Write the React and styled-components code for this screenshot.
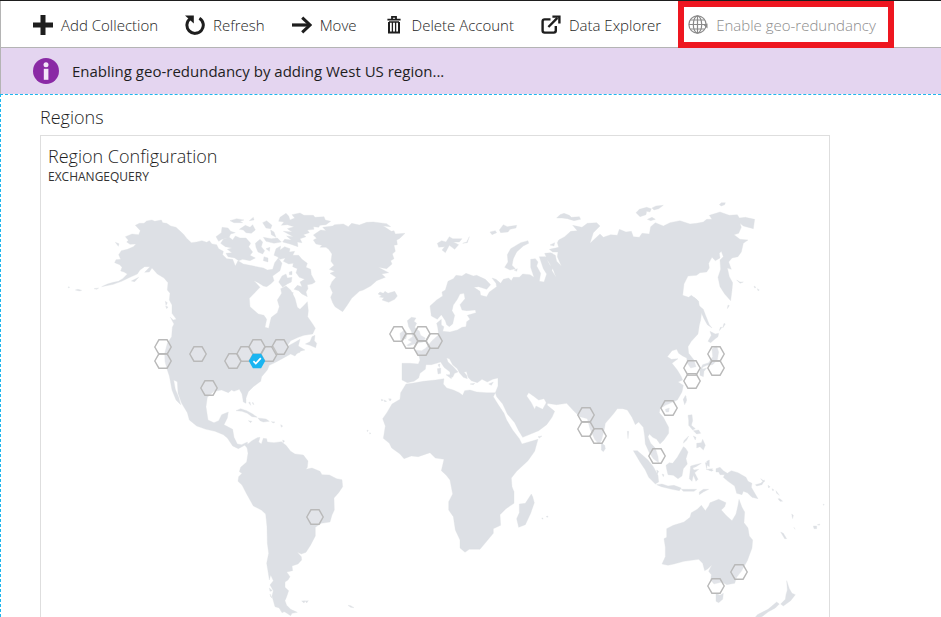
import React from "react";
import styled, { createGlobalStyle, css } from "styled-components";

const GlobalStyle = createGlobalStyle`
  *, *::before, *::after { box-sizing: border-box; }
  body {
    margin: 0;
    background: #fff;
    color: #333;
    font-family: "Open Sans", "Noto Sans", sans-serif;
    font-size: 15px;
  }
`;

const Blade = styled.div`
  display: flex;
  flex-direction: column;
  height: 100vh;
  overflow: hidden;
  border-top: 1px solid #1e1e1e;
`;

const Toolbar = styled.header`
  display: flex;
  flex: none;
  align-items: stretch;
  gap: 27px;
  height: 47px;
  padding-left: 32px;
  border-left: 1px solid #b4b4b4;
  border-bottom: 1px solid #b4b4b4;
`;

const Command = styled.button`
  position: relative;
  display: flex;
  flex: none;
  align-items: center;
  gap: 8px;
  padding: 2px 0 0;
  border: 0;
  background: none;
  color: #1e1e1e;
  font-family: inherit;
  font-size: 15px;
  font-weight: 300;
  line-height: 20px;
  white-space: nowrap;

  svg { flex: none; color: #1e1e1e; }

  &:disabled {
    color: #8c8c8c;
    svg { color: #8a8a8a; }
  }

  ${(p) => p.$highlighted && css`
    &::after {
      content: "";
      position: absolute;
      inset: 0 -18px -1px -10px;
      border: 6px solid #ee1620;
      pointer-events: none;
    }
  `}
`;

const Banner = styled.div`
  display: flex;
  flex: none;
  align-items: center;
  gap: 13px;
  height: 46px;
  padding-left: 32px;
  border-left: 1px solid #b4b4b4;
  background: #e4d5f0;
  color: #1e1e1e;
  font-size: 15px;
  line-height: 20px;
`;

const Content = styled.main`
  flex: 1;
  min-height: 0;
  padding: 12px 40px 0 39px;
  border-top: 1px dashed #1fb6ee;
  border-left: 1px dashed #1fb6ee;
`;

const SectionTitle = styled.h2`
  margin: 0 0 8px;
  color: #1e1e1e;
  font-size: 18px;
  font-weight: 300;
  line-height: 20px;
`;

const Card = styled.section`
  width: 100%;
  max-width: 790px;
  border: 1px solid #dedede;
`;

const CardHeader = styled.div`
  padding: 10px 7px 5px;
`;

const CardTitle = styled.h3`
  margin: 0;
  color: #1e1e1e;
  font-size: 18px;
  font-weight: 300;
  line-height: 20px;
`;

const CardSubtitle = styled.p`
  margin: 3px 0 0;
  color: #333;
  font-size: 12px;
  line-height: 16px;
`;

const Map = styled.svg`
  display: block;
  width: 100%;
  height: auto;
`;

const Icon = ({ children, ...rest }) => (
  <svg width="20" height="20" viewBox="0 0 20 20" fill="none" stroke="currentColor" aria-hidden="true" {...rest}>
    {children}
  </svg>
);

const PlusIcon = () => <Icon strokeWidth="5"><path d="M10 0v20M0 10h20" /></Icon>;

const RefreshIcon = () => (
  <Icon strokeWidth="3">
    <path d="M5.2 3.6A8.2 8.2 0 1 0 14.4 3.2" />
    <path d="M0 0.4h8.8v8.2z" fill="currentColor" stroke="none" />
  </Icon>
);

const MoveIcon = () => (
  <Icon>
    <path d="M0 10h18" strokeWidth="3.2" />
    <path d="M10.2 2.6 18 10l-7.8 7.4" strokeWidth="3" />
  </Icon>
);

const TrashIcon = () => (
  <Icon strokeWidth="1.8">
    <path d="M3.4 4.6h13.2M8 4V1.9h4V4" />
    <path d="M5 7v10.6h10V7" strokeWidth="2" />
    <path d="M8.4 7v10M11.6 7v10M5 7h10" strokeWidth="1.3" />
  </Icon>
);

const ExternalIcon = () => (
  <Icon strokeWidth="2.4">
    <path d="M9.5 4.4H3.6q-2 0-2 2v9.2q0 2 2 2h9.2q2 0 2-2V11" />
    <path d="m7.4 12 9-9.2" strokeWidth="2.4" />
    <path d="M11.4 1.6h7v7" strokeWidth="2.4" />
  </Icon>
);

const GlobeIcon = () => (
  <Icon strokeWidth="1.2">
    <circle cx="9.5" cy="9.5" r="8.6" />
    <ellipse cx="9.5" cy="9.5" rx="4.2" ry="8.6" />
    <path d="M9.5 1v17M1 9.5h17M2.4 5h14.2M2.4 14h14.2" />
    <path d="m15 9.5 4.5-1v5z" fill="currentColor" stroke="none" />
  </Icon>
);

const InfoIcon = () => (
  <svg width="26" height="26" viewBox="0 0 26 26" aria-hidden="true">
    <circle cx="13" cy="13" r="13" fill="#8a2aa5" />
    <circle cx="13" cy="6.8" r="2.5" fill="#f3e6f8" />
    <rect x="10.8" y="10.8" width="4.6" height="11" fill="#f3e6f8" />
  </svg>
);

const COMMANDS = [
  { label: "Add Collection", icon: PlusIcon },
  { label: "Refresh", icon: RefreshIcon },
  { label: "Move", icon: MoveIcon },
  { label: "Delete Account", icon: TrashIcon },
  { label: "Data Explorer", icon: ExternalIcon },
  { label: "Enable geo-redundancy", icon: GlobeIcon, disabled: true, highlighted: true },
];

const LAND = [
  {
    x: 50, y: 190,
    shapes: [
      // North and Central America
      "155,290 172,282 190,277 205,274 218,266 232,252 222,246 212,243 216,232 209,224 194,218 198,209 212,208 206,194 214,182 232,178 250,170 258,162 240,163 230,156 235,151 226,140 246,132 266,134 271,122 256,106 268,100 282,100 290,93 306,90 314,94 334,90 338,98 350,100 362,108 378,112 400,132 410,145 424,158 440,156 456,152 470,157 478,152 486,162 500,164 506,176 520,184 518,194 530,206 548,208 556,228 564,212 580,222 600,226 640,234 652,240 668,238 674,218 685,204 696,220 690,242 668,258 672,272 662,282 650,290 640,288 625,278 612,272 630,292 622,300 598,325 600,350 625,372 642,376 650,388 645,412 656,415 661,393 664,382 682,368 688,350 682,330 695,310 692,296 708,288 722,300 735,325 742,352 750,358 763,345 772,335 775,362 773,380 788,402 796,415 788,432 762,436 745,442 722,452 710,470 732,458 750,448 745,468 765,480 745,485 735,498 722,492 702,503 680,515 658,526 652,540 635,560 632,574 610,590 595,605 588,625 588,640 580,636 576,612 568,598 552,604 545,600 535,608 515,600 492,604 472,622 468,650 474,690 492,698 506,692 515,674 535,666 532,684 522,704 548,718 552,742 562,762 575,764 592,756 594,776 584,766 565,776 548,768 532,744 520,734 495,724 468,718 440,708 418,690 412,668 395,640 384,610 382,575 371,570 376,598 386,622 392,644 378,630 366,600 358,558 352,540 345,515 344,490 352,460 365,440 367,412 372,402 361,382 370,390 379,388 366,370 366,345 358,330 360,310 352,300 354,278 342,264 332,258 322,252 306,234 298,246 284,247 300,230 284,230 270,240 262,252 240,262 215,274 190,283",
      "196,157 207,161 205,169", "244,273 266,262 254,275",
      "55,290 59,292 55,294", "76,300 84,298 95,301 88,303", "132,296 146,294 140,298",
      "346,334 352,338 348,346", "347,348 354,351 350,356",
    ],
  },
  {
    x: 200, y: 190,
    shapes: [
      // Greenland, Iceland, Newfoundland
      "340,150 350,145 340,135 362,120 378,122 368,112 398,108 404,104 430,102 445,110 455,100 478,105 500,97 520,96 560,101 572,110 550,108 574,124 582,122 586,132 615,130 598,146 590,150 592,164 582,166 586,184 577,192 582,206 572,212 576,222 560,236 535,232 566,248 545,252 556,262 530,272 512,288 490,300 478,304 455,325 442,345 428,365 405,350 398,338 392,322 398,308 390,290 396,275 408,262 390,250 404,244 388,238 402,226 393,214 396,192 386,178 378,172 360,172 366,166 348,162",
      "534,312 540,306 550,310 555,304 564,310 584,304 592,318 584,328 566,337 546,330 552,323 538,321 545,317",
      "316,462 330,455 336,440 345,436 343,452 350,460 347,473 330,466",
      "285,487 302,476 300,487 288,491",
      // Canadian Arctic
      "240,82 258,70 266,78 270,90 284,84 276,74 300,69 312,76 340,76 345,82 372,80 376,90 392,94 378,104 360,106 356,112 340,110 342,118 322,120 328,128 310,134 318,140 300,146 306,158 292,156 294,170 270,162 248,156 254,148 274,150 260,138 280,140 250,124 276,126 262,116 282,110 262,104 244,106 252,96 236,94",
      "62,160 70,148 88,142 98,150 106,138 120,144 138,144 152,160 146,170 158,186 150,196 166,204 150,212 128,208 116,212 104,204 84,200 78,190 96,188 82,178 96,174 76,170",
      "48,140 64,128 66,112 84,114 92,124 106,128 92,132 86,144 66,148 56,154",
      "90,92 110,86 132,90 120,94 128,98 102,98", "118,118 136,106 150,112 158,104 166,120 154,130 138,128 130,120",
      "188,98 200,92 216,106 212,116 198,114", "166,160 180,148 188,156 184,170 194,182 188,192 174,186 168,172",
      "190,142 214,146 232,144 244,156 222,160 198,154", "212,120 222,126 228,142 214,134", "148,92 160,82 162,90",
      "198,176 210,172 208,184", "192,200 204,204 204,216 190,212",
      "222,196 228,176 242,168 240,180 254,170 270,176 268,186 284,184 278,196 296,196 306,208 322,220 318,232 332,238 334,254 346,276 336,282 322,284 324,296 318,306 322,320 306,312 296,302 282,298 292,286 306,290 300,276 314,268 298,262 288,248 292,236 278,230 280,220 266,222 250,214 256,204 240,208 232,200",
      "236,276 246,258 258,252 262,264 276,262 274,276 262,282 248,292", "268,246 276,244 276,254 268,254", "272,306 280,308 276,316",
    ],
  },
  {
    x: 220, y: 380,
    shapes: [
      // South America and the Caribbean
      "80,195 96,182 112,173 120,172 116,186 124,192 130,175 140,176 142,186 162,188 184,185 198,196 212,214 225,222 250,225 264,243 262,262 258,268 276,264 300,274 306,284 328,285 350,296 366,299 368,320 356,338 342,354 343,390 336,405 330,426 304,430 286,442 286,468 272,495 258,517 244,522 232,517 244,530 245,540 234,552 216,558 218,572 200,576 210,590 204,600 195,606 195,622 206,632 200,650 195,662 200,676 212,688 232,697 216,700 212,707 195,696 186,694 176,683 165,680 156,648 160,632 150,615 160,602 152,585 148,600 145,580 140,550 146,520 142,490 141,440 137,402 124,390 100,378 90,360 80,342 66,315 54,304 56,290 66,280 58,275 62,262 80,246 84,220",
      "148,624 157,632 150,634", "150,642 157,655 152,650", "180,688 192,695 186,698",
      "48,92 62,86 80,92 98,102 112,112 96,110 82,100 66,94", "114,114 138,117 148,124 130,126 120,122", "85,122 96,124 92,128", "154,125 165,126 160,129",
      "86,68 90,66 92,76", "98,66 102,74 98,72", "182,134 188,138 184,142", "188,180 194,183 189,188",
      "245,663 256,662 252,669", "256,663 265,662 260,669", "384,676 392,677 402,683 392,682",
      "441,150 445,152 442,155", "449,158 453,160 449,162", "484,58 490,60 485,63", "508,56 514,57 510,63",
    ],
  },
  {
    x: 370, y: 190,
    shapes: [
      // Europe and Asia
      "96,520 120,520 145,522 150,510 146,495 132,480 155,482 168,474 186,452 206,434 203,412 200,400 214,388 214,405 222,410 218,424 240,426 262,420 276,412 288,410 290,395 300,388 292,376 318,368 316,360 290,362 276,360 270,344 285,326 282,310 270,312 262,328 250,345 246,362 254,376 248,402 238,410 230,404 226,392 214,374 202,388 184,378 180,348 200,330 218,318 216,306 226,300 234,274 250,266 258,256 276,258 288,250 310,258 320,256 346,268 362,284 350,298 326,290 312,292 330,304 332,316 350,320 358,306 380,290 378,280 366,264 378,268 392,280 400,268 416,264 424,272 430,262 448,262 458,252 480,254 492,262 482,232 482,208 496,206 504,216 500,228 512,250 508,274 522,276 530,252 520,236 508,200 526,200 540,226 548,230 546,242 558,262 550,240 534,212 524,190 542,188 556,196 560,214 574,228 562,200 564,186 548,186 538,178 566,172 562,158 566,150 584,140 602,124 622,122 608,106 636,112 652,100 680,98 690,108 670,128 660,160 690,132 700,142 722,134 742,136 748,118 768,126 784,124 790,140 808,142 816,130 838,132 842,110 856,98 880,108 900,98 930,92 960,102 980,100 1000,96 1010,88 1026,88 1018,76 1050,66 1078,76 1102,74 1108,84 1126,82 1154,88 1150,116 1120,108 1110,100 1114,112 1106,130 1092,134 1110,148 1134,150 1120,160 1114,186 1104,200 1086,204 1076,216 1084,238 1072,234 1078,260 1088,278 1086,300 1082,332 1064,312 1050,290 1044,262 1052,238 1050,210 1060,200 1054,184 1048,190 1050,204 1036,212 1026,202 1016,220 1018,234 1010,246 990,248 980,256 954,258 942,282 938,316 956,322 964,316 982,330 986,346 996,358 992,390 988,406 984,432 964,454 954,470 956,490 972,510 978,530 962,534 952,520 950,504 938,498 926,490 920,478 906,482 892,500 904,508 924,506 906,520 922,540 934,560 938,570 924,576 940,586 936,606 922,630 900,640 886,646 870,656 868,668 880,682 896,712 896,730 882,750 870,762 860,748 848,742 838,732 834,740 842,760 856,774 864,800 866,818 850,806 838,788 826,762 824,738 820,712 806,696 796,704 786,682 772,660 758,656 742,656 730,672 706,700 702,722 694,752 686,762 674,748 660,716 652,686 630,680 612,664 590,640 560,644 530,640 522,626 506,630 490,618 476,608 470,618 484,638 494,658 498,648 518,658 532,632 532,646 554,664 546,682 530,704 506,722 458,742 446,722 434,698 412,672 398,642 380,620 376,608 384,588 384,564 368,568 352,576 336,568 322,578 304,572 294,562 290,546 306,540 300,530 330,534 328,540 306,544 282,546 290,556 292,566 280,562 268,548 262,536 248,524 238,506 230,504 234,516 250,530 264,546 254,550 248,562 240,558 240,546 222,532 212,516 200,520 184,524 168,524 166,538 150,550 146,564 132,574 112,578 96,570",
      // Africa and Madagascar
      "108,582 126,580 160,574 196,570 222,566 220,582 230,594 250,600 268,608 278,616 284,602 300,600 320,606 350,608 376,608 370,620 386,646 402,670 410,690 428,720 448,746 456,762 476,756 504,748 494,784 474,812 440,844 424,864 426,890 432,905 432,940 408,956 390,974 392,1006 370,1016 370,1030 330,1078 298,1078 285,1087 270,1074 270,1050 256,1020 250,980 236,960 236,935 248,912 240,870 228,855 214,842 222,808 196,804 180,788 145,800 124,798 102,806 90,792 65,774 58,760 40,745 46,708 38,686 52,666 66,642 90,628 92,608",
      "484,912 488,920 493,938 482,970 466,1004 446,1012 440,986 448,968 448,942 466,940",
      // Islands around Europe
      "112,392 124,382 138,384 132,394 140,400 134,412 148,424 152,436 166,444 160,456 140,460 116,468 110,466 126,456 114,450 128,440 124,424 116,410", "90,430 104,420 112,430 108,446 92,450",
      "202,160 215,152 228,156 238,140 248,146 276,146 268,156 250,156 266,164 254,178 238,166 226,188 216,180 224,170 206,172", "278,160 290,156 298,140 292,158",
      "360,126 376,122 380,128 366,134", "388,120 400,104 412,110 440,106 438,114 420,118 414,126 392,128",
      "404,232 414,216 412,194 422,176 452,158 474,152 476,160 460,168 440,186 430,206 426,226 436,236 420,240", "432,240 442,236 440,244",
      "204,524 210,522 208,532", "202,536 212,534 212,550 204,552", "228,554 246,554 244,566", "300,582 314,580 310,584", "356,582 370,576 364,586",
      "42,630 50,634 44,635", "56,626 60,632", "515,984 519,984 518,988", "528,980 534,978 533,982", "504,740 516,738 508,744",
    ],
  },
  {
    x: 540, y: 190,
    shapes: [
      // Arctic Ocean, Sakhalin, Japan and the Kurils
      "50,84 60,74 72,70 88,76 94,82 118,80 122,88 102,92 82,86 66,84", "288,68 298,58 320,52 334,56 330,66 320,64 318,74 300,80", "336,54 348,48 370,46 356,56 342,60", "322,88 336,82 346,88 332,92", "538,44 544,38 556,38 554,44 544,48",
      "462,322 476,334 478,348 490,358 496,374 500,384 508,404 516,414 502,404 492,386 484,368 474,350", "504,454 514,436 510,424 526,432 536,430 534,440 524,448 512,458",
      "516,476 530,468 536,486 532,510 518,524 500,526 488,532 486,538 500,534 492,544 490,560 480,556 480,540 488,524 506,518 518,500",
      "552,400 556,402 548,414", "564,345 568,347 562,356", "541,412 546,412 538,422", "590,270 600,276 610,276 600,280", "642,288 648,292 644,294", "652,296 658,300 654,302", "430,628 438,618 438,638",
      "30,165 44,158 42,168", "0,205 20,200 36,190 46,216 30,214",
    ],
  },
  {
    x: 540, y: 350,
    shapes: [
      // South-East Asia
      "184,280 194,286 196,296 190,305 184,300", "430,150 436,136 440,150 434,164", "376,178 388,174 386,186 378,186",
      "280,302 292,302 308,316 324,330 340,350 354,376 356,396 346,402 326,382 316,360 300,336", "350,404 366,402 384,408 402,406 424,414 418,422 396,418 364,410", "424,418 446,418 470,418 462,424 430,424", "478,426 490,418 506,418 490,426 478,434",
      "378,346 388,338 398,340 412,322 430,290 436,294 444,306 438,326 442,342 430,356 426,378 414,386 400,376 384,374 380,358",
      "452,348 466,344 484,340 468,350 458,354 462,360 476,358 464,368 474,388 468,394 460,376 456,394 448,386 450,366",
      "444,196 456,194 458,212 454,226 466,236 458,240 446,226 446,210", "460,242 476,240 482,250 470,252", "460,258 468,262 466,270", "470,280 484,278 488,268 496,286 490,300 480,290 470,294", "432,272 446,258 440,270 430,280", "500,334 508,330 508,350 502,346", "506,360 520,360 516,364",
      "262,244 266,244 264,266", "350,360 356,364 352,372", "366,372 372,374 370,380",
    ],
  },
  {
    x: 640, y: 440,
    shapes: [
      // New Guinea, Australia, New Zealand and the Pacific
      "228,86 240,82 250,92 262,100 274,92 294,98 318,112 324,124 336,130 334,142 354,176 336,172 322,158 310,154 306,164 290,160 284,138 264,124 250,112 254,104 240,104 236,96 228,96", "346,134 362,130 374,120 366,134 350,138", "362,116 374,124 370,126", "384,136 390,140 386,144", "396,146 402,150 398,152", "408,152 418,166 410,160", "414,176 420,176 428,184 420,184", "196,68 202,68 200,86", "198,88 218,86 214,92",
      "80,266 100,256 132,246 150,232 154,218 172,208 184,196 196,212 206,198 210,188 236,178 258,188 254,200 244,210 258,226 276,242 288,222 294,196 297,178 306,202 314,216 312,248 324,264 328,288 338,300 336,324 322,362 304,394 290,412 284,430 260,434 246,426 222,432 212,420 214,404 206,394 216,374 204,386 194,392 188,370 176,358 132,364 102,372 84,376 66,372 76,350 76,322 72,296 80,292",
      "228,460 240,466 250,460 248,478 236,488 228,484", "440,422 448,446 456,460 466,464 452,482 430,498 422,492 436,478 438,464 442,450", "410,486 418,492 406,504 384,516 366,530 344,534 352,524 384,508",
      "422,276 430,280 440,296 434,296", "520,258 530,258 530,266 522,266", "532,254 540,252 538,256", "455,222 460,226 458,236", "462,262 465,268", "550,192 553,194 550,196",
    ],
  },
];

/* Data centre sites on the map; the active one is the write region. */
const SITES = [
  [163, 347], [163, 361], [198, 354], [209, 388], [233, 361], [245, 354], [257, 347], [269, 354], [280, 347],
  [398, 334], [410, 341], [422, 334], [422, 348], [434, 341], [315, 517],
  [586, 415], [586, 429], [598, 436], [669, 408], [657, 456],
  [692, 368], [692, 381], [716, 354], [716, 368], [739, 572], [716, 586],
];

const HEXAGON = "-8.2,0 -4.1,-7.2 4.1,-7.2 8.2,0 4.1,7.2 -4.1,7.2";

function WorldMap() {
  return (
    <Map viewBox="41 190 788 450" role="img" aria-label="World map of available regions">
      <g fill="#dde0e5" stroke="#dde0e5" strokeWidth="1" strokeLinejoin="round">
        {LAND.map((part) => (
          <g key={`${part.x}-${part.y}`} transform={`translate(${part.x} ${part.y}) scale(0.33333)`}>
            {part.shapes.map((points) => <polygon key={points} points={points} />)}
          </g>
        ))}
      </g>
      <g fill="#fff" fillOpacity="0.15" stroke="#b9b9b9" strokeWidth="1.4">
        {SITES.map(([x, y]) => (
          <polygon key={`${x}-${y}`} points={HEXAGON} transform={`translate(${x} ${y})`} />
        ))}
      </g>
      <g transform="translate(257 361)">
        <polygon points={HEXAGON} fill="#1bb5f1" />
        <path d="M-3.6 0.2-1.2 2.6 3.8-2.8" fill="none" stroke="#fff" strokeWidth="1.7" />
      </g>
    </Map>
  );
}

export default function App() {
  return (
    <>
      <GlobalStyle />
      <Blade>
        <Toolbar>
          {COMMANDS.map(({ label, icon: Glyph, disabled, highlighted }) => (
            <Command key={label} type="button" disabled={disabled} $highlighted={highlighted}>
              <Glyph />
              {label}
            </Command>
          ))}
        </Toolbar>
        <Banner role="status">
          <InfoIcon />
          Enabling geo-redundancy by adding West US region...
        </Banner>
        <Content>
          <SectionTitle>Regions</SectionTitle>
          <Card>
            <CardHeader>
              <CardTitle>Region Configuration</CardTitle>
              <CardSubtitle>EXCHANGEQUERY</CardSubtitle>
            </CardHeader>
            <WorldMap />
          </Card>
        </Content>
      </Blade>
    </>
  );
}
